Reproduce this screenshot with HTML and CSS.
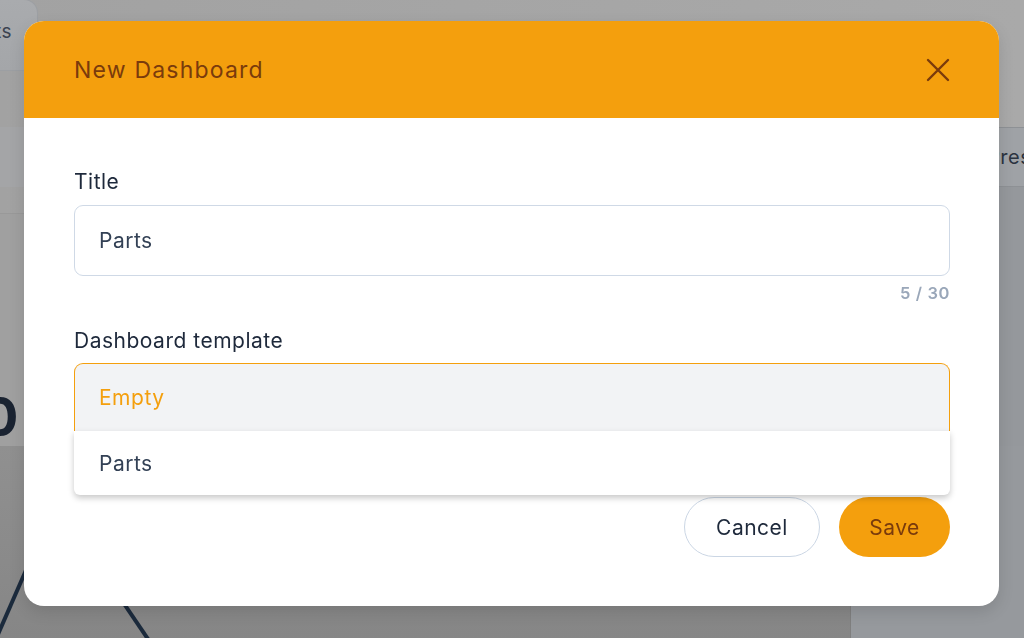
FILE: index.html
```html
<!DOCTYPE html>
<html lang="en">
<head>
<meta charset="utf-8">
<title>New Dashboard</title>
<link rel="stylesheet" href="styles.css">
</head>
<body>
<div class="page">
  <div class="page-top">
    <div class="tab"><span>Charts</span></div>
  </div>
  <div class="page-band">
    <div class="band-left"></div>
    <div class="band-right"><span class="res">Presets</span></div>
  </div>
  <div class="page-main">
    <div class="main-left">
      <div class="stat">0</div>
      <div class="rule r1"></div>
      <div class="rule r2"></div>
    </div>
    <div class="main-right"></div>
  </div>
  <div class="page-bottom">
    <svg class="chart" width="850" height="192" viewBox="0 0 850 192">
      <path d="M-4 193 L30 115" stroke="#1b2a3c" stroke-width="4" fill="none"/>
      <path d="M110 137 L152 199" stroke="#1b2a3c" stroke-width="4" fill="none"/>
    </svg>
    <div class="bottom-right"></div>
  </div>
</div>

<div class="modal" role="dialog" aria-labelledby="dlg-title">
  <div class="modal-head">
    <h2 id="dlg-title" class="modal-title">New Dashboard</h2>
    <button class="close" aria-label="Close">
      <svg width="24" height="24" viewBox="0 0 24 24"><path d="M2 2 L22 22 M22 2 L2 22" stroke="#7a3b0c" stroke-width="2.4" stroke-linecap="round" fill="none"/></svg>
    </button>
  </div>
  <div class="modal-body">
    <label class="label">Title</label>
    <div class="input">Parts</div>
    <div class="counter">5 / 30</div>
    <label class="label label2">Dashboard template</label>
    <div class="select-wrap">
      <div class="select">Empty</div>
      <div class="menu">
        <div class="option">Parts</div>
      </div>
    </div>
    <div class="actions">
      <button class="btn btn-cancel">Cancel</button>
      <button class="btn btn-save">Save</button>
    </div>
  </div>
</div>
</body>
</html>
```
FILE: styles.css
```css
* { box-sizing: border-box; }
html, body { margin: 0; padding: 0; }
body {
  width: 1024px;
  height: 638px;
  overflow: hidden;
  font-family: "Inter", "Noto Sans", sans-serif;
  background: #a3a3a3;
  color: #1e293b;
}

/* dimmed page underneath */
.page {
  width: 1024px;
  height: 638px;
  display: flex;
  flex-direction: column;
  background: linear-gradient(90deg, #a2a2a2 0%, #a6a6a6 60%, #a9a9a9 100%);
}
.page-top {
  height: 127px;
  display: flex;
  align-items: flex-start;
}
.tab {
  width: 38px;
  height: 72px;
  margin-top: -1px;
  border: 1px solid #9c9fa3;
  border-left: none;
  border-radius: 0 14px 14px 0;
  background: linear-gradient(180deg, #a9abae, #a4a6a9);
  display: flex;
  justify-content: flex-end;
  overflow: hidden;
  padding-right: 25px;
  padding-top: 20px;
}
.tab span {
  font-size: 19px;
  letter-spacing: 0.5px;
  color: #3b4350;
  white-space: nowrap;
}
.page-band {
  height: 60px;
  display: flex;
}
.band-left { flex: 1; background: #a4a5a7; }
.band-right {
  width: 210px;
  background: #9fa2a6;
  border-top: 1px solid #8e9195;
  border-bottom: 1px solid #8e9195;
  border-left: 1px solid #8e9195;
  display: flex;
  align-items: center;
  justify-content: flex-start;
  overflow: hidden;
  padding-left: 172px;
}
.res {
  font-size: 20px;
  letter-spacing: 0.5px;
  color: #2b3340;
  white-space: nowrap;
}
.page-main {
  height: 292px;
  display: flex;
}
.main-left {
  width: 850px;
  background: #a0a0a0;
  border-top: 1px solid #999;
  padding-top: 175px;
  margin-top: 26px;
}
.stat {
  font-size: 54px;
  font-weight: 700;
  color: #1a2331;
  line-height: 56px;
  margin-left: -18px;
}
.rule { height: 1px; background: #959595; }
.r1 { margin-top: 42px; }
.r2 { margin-top: 59px; }
.main-right { flex: 1; background: #95989c; }
.page-bottom {
  flex: 1;
  display: flex;
  margin-top: -33px;
  background: linear-gradient(180deg, #909090, #868686);
}
.chart { display: block; }
.bottom-right {
  flex: 1;
  background: #96999d;
  border-left: 1px solid #7f7f7f;
}

/* modal */
.modal {
  position: fixed;
  left: 24px;
  top: 21px;
  width: 975px;
  height: 585px;
  border-radius: 20px;
  background: #fff;
  box-shadow: 0 6px 16px rgba(0,0,0,0.12);
}
.modal-head {
  height: 97px;
  background: #f49f0d;
  border-radius: 20px 20px 0 0;
  display: flex;
  align-items: center;
  justify-content: space-between;
  padding: 0 49px 0 50px;
}
.modal-title {
  margin: 0;
  font-size: 23px;
  letter-spacing: 1.2px;
  font-weight: 400;
  color: #7a3b0c;
}
.close {
  border: 0;
  background: none;
  padding: 0;
  width: 24px;
  height: 24px;
  display: flex;
}
.modal-body {
  padding: 52px 49px 49px 50px;
  display: flex;
  flex-direction: column;
}
.label {
  font-size: 21px;
  letter-spacing: 0.5px;
  line-height: 24px;
  color: #1e293b;
}
.input {
  margin-top: 11px;
  height: 71px;
  border: 1.5px solid #cfd9e6;
  border-radius: 9px;
  padding-left: 24px;
  display: flex;
  align-items: center;
  font-size: 21px;
  letter-spacing: 0.5px;
  color: #334155;
}
.counter {
  margin-top: 8px;
  text-align: right;
  font-size: 16.5px;
  letter-spacing: 0.6px;
  line-height: 18px;
  font-weight: 600;
  color: #9aa7b9;
}
.label2 { margin-top: 27px; }
.select-wrap {
  position: relative;
  margin-top: 10px;
}
.select {
  height: 68px;
  border: 1.5px solid #f49f0d;
  border-bottom: none;
  border-radius: 9px 9px 0 0;
  background: #f2f3f5;
  padding-left: 24px;
  display: flex;
  align-items: center;
  font-size: 21px;
  letter-spacing: 0.5px;
  color: #f49f0d;
}
.menu {
  position: absolute;
  left: 0;
  right: 0;
  top: 68px;
  height: 64px;
  background: #fff;
  border-radius: 0 0 6px 6px;
  box-shadow: 0 3px 6px rgba(0,0,0,0.22);
  z-index: 2;
}
.option {
  height: 64px;
  padding-left: 25px;
  display: flex;
  align-items: center;
  font-size: 21px;
  letter-spacing: 0.5px;
  color: #334155;
}
.actions {
  margin-top: 66px;
  display: flex;
  justify-content: flex-end;
  gap: 19px;
}
.btn {
  height: 60px;
  border-radius: 30px;
  font-family: inherit;
  font-size: 21px;
  letter-spacing: 0.5px;
  cursor: pointer;
}
.btn-cancel {
  width: 136px;
  background: #fff;
  border: 1.5px solid #cbd6e4;
  color: #1e293b;
}
.btn-save {
  width: 111px;
  background: #f49f0d;
  border: none;
  color: #7a3b0c;
}
```
